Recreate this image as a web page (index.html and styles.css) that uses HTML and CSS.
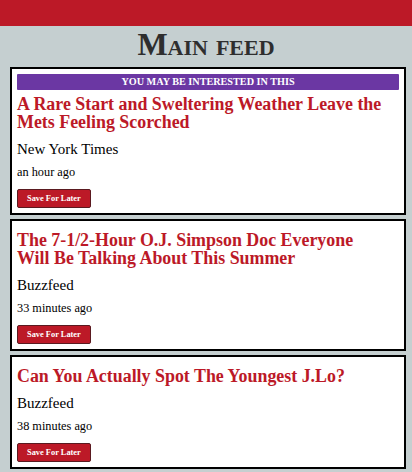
FILE: index.html
```html
<!DOCTYPE html>
<html lang="en">
<head>
<meta charset="utf-8">
<title>Main feed</title>
<link rel="stylesheet" href="styles.css">
</head>
<body>
<header class="topbar"></header>
<h1 class="page-title">Main feed</h1>
<main class="feed">
  <article class="card">
    <div class="banner">You may be interested in this</div>
    <h2 class="card-title">A Rare Start and Sweltering Weather Leave the Mets Feeling Scorched</h2>
    <div class="source">New York Times</div>
    <div class="time">an hour ago</div>
    <div class="actions"><button class="save-btn">Save For Later</button></div>
  </article>
  <article class="card">
    <h2 class="card-title">The 7-1/2-Hour O.J. Simpson Doc Everyone Will Be Talking About This Summer</h2>
    <div class="source">Buzzfeed</div>
    <div class="time">33 minutes ago</div>
    <div class="actions"><button class="save-btn">Save For Later</button></div>
  </article>
  <article class="card">
    <h2 class="card-title">Can You Actually Spot The Youngest J.Lo?</h2>
    <div class="source">Buzzfeed</div>
    <div class="time">38 minutes ago</div>
    <div class="actions"><button class="save-btn">Save For Later</button></div>
  </article>
</main>
</body>
</html>
```
FILE: styles.css
```css
html, body {
  margin: 0;
  padding: 0;
}
body {
  background: #c5cfd0;
  font-family: "Liberation Serif", "Times New Roman", serif;
  color: #000;
  overflow: hidden;
}
.topbar {
  height: 26px;
  background: #bc1927;
}
.page-title {
  margin: 0 0 5px;
  font-size: 32px;
  line-height: 36px;
  font-weight: bold;
  font-variant: small-caps;
  text-align: center;
  color: #2e2e2e;
}
.feed {
  display: flex;
  flex-direction: column;
  gap: 4px;
  margin: 0 6px 0 10px;
}
.card {
  background: #fff;
  border: 2px solid #000;
  padding: 5px;
  display: flex;
  flex-direction: column;
}
.banner {
  height: 16px;
  line-height: 16px;
  background: #6b37a3;
  color: #fff;
  font-size: 10.2px;
  font-weight: bold;
  text-transform: uppercase;
  text-align: center;
  border-radius: 1px;
}
.card-title {
  margin: 5px 0 0;
  padding-right: 11px;
  font-size: 17.9px;
  line-height: 18px;
  font-weight: bold;
  color: #bc1927;
}
.source {
  margin-top: 9px;
  font-size: 15px;
  line-height: 18px;
}
.time {
  margin-top: 7px;
  font-size: 12.3px;
  line-height: 14px;
}
.actions {
  margin-top: 10px;
  display: flex;
}
.save-btn {
  height: 19px;
  padding: 0 9px;
  border: 1px solid #5a1a20;
  border-radius: 2px;
  background: #bc1927;
  color: #fff;
  font-family: "Liberation Serif", "Times New Roman", serif;
  font-size: 8.4px;
  font-weight: bold;
  line-height: 17px;
}
```
